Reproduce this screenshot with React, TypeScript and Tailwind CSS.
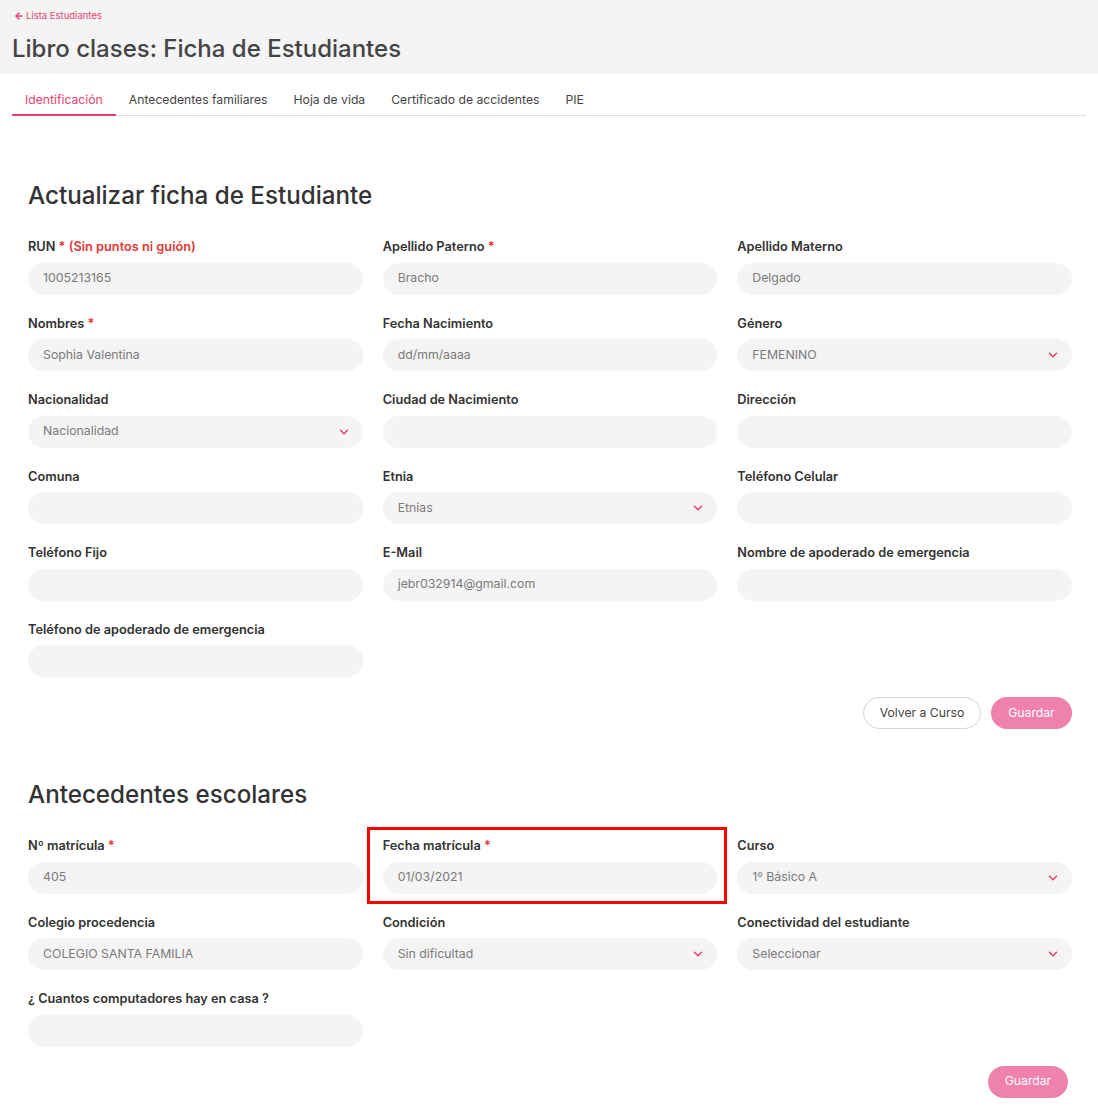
import { ArrowLeft, ChevronDown } from 'lucide-react';

type Field = {
  label: string;
  value?: string;
  required?: boolean;
  hint?: string;
  select?: boolean;
  highlight?: boolean;
};

const fichaFields: Field[] = [
  { label: 'RUN', required: true, hint: '(Sin puntos ni guión)', value: '1005213165' },
  { label: 'Apellido Paterno', required: true, value: 'Bracho' },
  { label: 'Apellido Materno', value: 'Delgado' },
  { label: 'Nombres', required: true, value: 'Sophia Valentina' },
  { label: 'Fecha Nacimiento', value: 'dd/mm/aaaa' },
  { label: 'Género', value: 'FEMENINO', select: true },
  { label: 'Nacionalidad', value: 'Nacionalidad', select: true },
  { label: 'Ciudad de Nacimiento' },
  { label: 'Dirección' },
  { label: 'Comuna' },
  { label: 'Etnia', value: 'Etnias', select: true },
  { label: 'Teléfono Celular' },
  { label: 'Teléfono Fijo' },
  { label: 'E-Mail', value: 'jebr032914@gmail.com' },
  { label: 'Nombre de apoderado de emergencia' },
  { label: 'Teléfono de apoderado de emergencia' },
];

const escolaresFields: Field[] = [
  { label: 'Nº matrícula', required: true, value: '405' },
  { label: 'Fecha matrícula', required: true, value: '01/03/2021', highlight: true },
  { label: 'Curso', value: '1º Básico A', select: true },
  { label: 'Colegio procedencia', value: 'COLEGIO SANTA FAMILIA' },
  { label: 'Condición', value: 'Sin dificultad', select: true },
  { label: 'Conectividad del estudiante', value: 'Seleccionar', select: true },
  { label: '¿ Cuantos computadores hay en casa ?' },
];

const tabs = ['Identificación', 'Antecedentes familiares', 'Hoja de vida', 'Certificado de accidentes', 'PIE'];

function FormField({ field }: { field: Field }) {
  return (
    <div className="relative flex flex-col">
      {field.highlight && (
        <span className="pointer-events-none absolute -left-[16px] -right-[10px] -top-[10px] -bottom-[10px] border-[3px] border-[#ff0000]" />
      )}
      <label className="mb-[7.5px] pt-[1px] text-[12.75px] font-semibold leading-[16px] text-[#333]">
        {field.label}
        {field.required && <span className="text-[#e53935]"> *</span>}
        {field.hint && <span className="text-[#e53935]"> {field.hint}</span>}
      </label>
      <div className="flex h-[32px] items-center justify-between rounded-full bg-[#f4f4f4] pl-[15px] pr-[12px] text-[12.3px] text-[#7a7a7a]">
        <span>{field.value}</span>
        {field.select && <ChevronDown className="h-[14px] w-[14px] text-[#e8436f]" strokeWidth={2.6} />}
      </div>
    </div>
  );
}

export default function App() {
  return (
    <div className="min-h-[1108px] w-full bg-white font-['Inter',sans-serif] text-[#333]">
      <header className="h-[74px] bg-[#f4f4f4] px-3 pt-[10px]">
        <a className="flex items-center gap-[2px] text-[9.5px] leading-[12px] text-[#e8436f]">
          <ArrowLeft className="ml-[2px] h-[10px] w-[10px]" strokeWidth={3.4} />
          Lista Estudiantes
        </a>
        <h1 className="mt-[12px] text-[24px] font-medium leading-[29px] text-[#444]">
          Libro clases: Ficha de Estudiantes
        </h1>
      </header>

      <nav className="mx-3 flex border-b border-[#ddd]">
        {tabs.map((tab, i) => (
          <div
            key={tab}
            className={
              i === 0
                ? '-mb-px flex h-[42px] items-center border-b-2 border-[#e8436f] px-[13px] pt-[13px] text-[12.2px] text-[#e8436f]'
                : 'flex h-[41px] items-center px-[13px] pt-[11px] text-[12.2px] text-[#444]'
            }
          >
            {tab}
          </div>
        ))}
      </nav>

      <main className="pl-[28px] pr-[26px] pb-[11px]">
        <h2 className="mt-[65px] text-[24.2px] font-medium leading-[29px] text-[#333]">
          Actualizar ficha de Estudiante
        </h2>
        <div className="mt-[28px] grid grid-cols-3 gap-x-5 gap-y-5">
          {fichaFields.map((f) => (
            <FormField key={f.label} field={f} />
          ))}
        </div>
        <div className="mt-5 flex justify-end gap-[10px]">
          <button className="h-[32px] w-[118px] rounded-full border border-[#d6d6d6] bg-white text-[12.2px] text-[#444]">
            Volver a Curso
          </button>
          <button className="h-[32px] w-[81px] rounded-full bg-[#ef82ad] text-[12.2px] text-white">Guardar</button>
        </div>

        <h2 className="mt-[51px] text-[24.2px] font-medium leading-[29px] text-[#333]">Antecedentes escolares</h2>
        <div className="mt-[28px] grid grid-cols-3 gap-x-5 gap-y-5">
          {escolaresFields.map((f) => (
            <FormField key={f.label} field={f} />
          ))}
        </div>
        <div className="mt-[19px] mr-[4px] flex justify-end">
          <button className="h-[32px] w-[80px] rounded-full bg-[#ef82ad] text-[12.2px] text-white">Guardar</button>
        </div>
      </main>
    </div>
  );
}
